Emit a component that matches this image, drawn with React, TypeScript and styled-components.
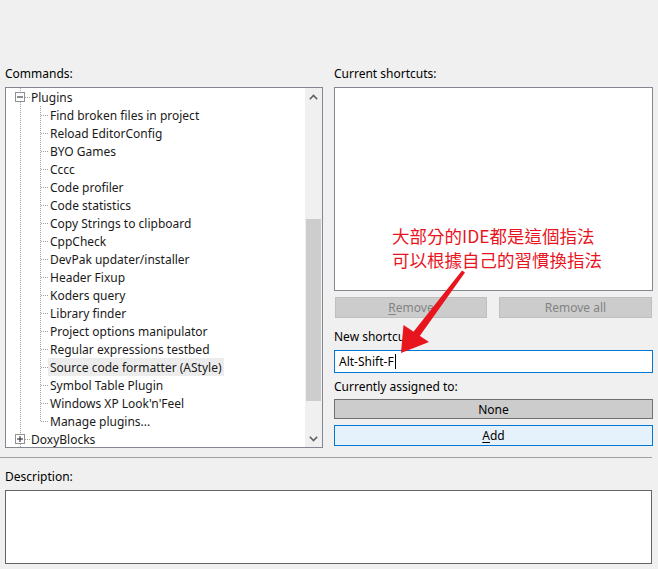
import React from "react";
import styled, { createGlobalStyle } from "styled-components";

const Global = createGlobalStyle`
  html, body { margin: 0; padding: 0; background: #f0f0f0; }
  body { font-family: "Noto Sans", "Open Sans", sans-serif; font-size: 12px; color: #000; }
  * { box-sizing: border-box; }
`;

const Page = styled.div`
  position: relative;
  width: 658px;
  height: 569px;
  overflow: hidden;
  padding: 64px 6px 0 5px;
  display: flex;
  flex-direction: column;
`;

const Columns = styled.div`
  display: grid;
  grid-template-columns: 318px 319px;
  column-gap: 11px;
  align-items: start;
`;

const Column = styled.div`
  display: flex;
  flex-direction: column;
`;

const Label = styled.div<{ $mt?: number; $mb?: number }>`
  height: 18px;
  line-height: 17px;
  padding-top: 1px;
  margin-top: ${(p) => p.$mt ?? 0}px;
  margin-bottom: ${(p) => p.$mb ?? 5}px;
  white-space: nowrap;
  color: #000;
`;

const TreeBox = styled.div`
  position: relative;
  height: 361px;
  border: 1px solid #828790;
  background: #fff;
  display: flex;
  overflow: hidden;
`;

const TreeRows = styled.div`
  flex: 1;
  display: flex;
  flex-direction: column;
  overflow: hidden;
`;

const Row = styled.div`
  height: 18px;
  flex: none;
  display: flex;
  align-items: center;
  white-space: nowrap;
  color: #1a1a1a;
`;

const RowText = styled.span<{ $selected?: boolean }>`
  height: 18px;
  line-height: 17px;
  padding: 1px 2px 0;
  margin-left: -2px;
  background: ${(p) => (p.$selected ? "#ececec" : "transparent")};
`;

const ScrollBar = styled.div`
  width: 17px;
  flex: none;
  background: #f0f0f0;
  display: flex;
  flex-direction: column;
  align-items: center;
`;

const ScrollArrow = styled.div`
  width: 17px;
  height: 17px;
  flex: none;
  display: flex;
  align-items: center;
  justify-content: center;
`;

const ScrollTrack = styled.div`
  flex: 1;
  width: 15px;
  display: flex;
  flex-direction: column;
`;

const Thumb = styled.div`
  width: 15px;
  background: #cdcdcd;
  margin-top: 114px;
  height: 182px;
`;

const ListBox = styled.div`
  position: relative;
  height: 204px;
  border: 1px solid #828790;
  background: #fff;
`;

const Annotation = styled.div`
  position: absolute;
  left: 57px;
  top: 136px;
  font-family: "Noto Sans CJK TC", "Noto Sans CJK SC", sans-serif;
  font-size: 17.5px;
  line-height: 24px;
  color: #e8151f;
  white-space: nowrap;
`;

const ButtonRow = styled.div`
  display: grid;
  grid-template-columns: 152px 153px;
  column-gap: 12px;
  padding-left: 1px;
  margin-top: 6px;
`;

const Button = styled.div<{ $variant: "disabled" | "neutral" | "primary"; $h: number }>`
  height: ${(p) => p.$h}px;
  display: flex;
  align-items: center;
  justify-content: center;
  white-space: nowrap;
  border: 1px solid
    ${(p) => (p.$variant === "disabled" ? "#bfbfbf" : p.$variant === "neutral" ? "#707070" : "#0078d7")};
  background: ${(p) => (p.$variant === "primary" ? "#e5f1fb" : "#cccccc")};
  color: ${(p) => (p.$variant === "disabled" ? "#838383" : "#000")};
`;

const Underline = styled.span`
  text-decoration: underline;
  text-underline-offset: 2px;
`;

const Input = styled.div`
  height: 23px;
  border: 1px solid #0078d7;
  background: #fff;
  display: flex;
  align-items: center;
  padding-left: 4px;
  white-space: nowrap;
`;

const Caret = styled.span`
  display: inline-block;
  width: 1px;
  height: 15px;
  background: #000;
  margin-left: 1px;
`;

const Separator = styled.div`
  height: 1px;
  background: #a0a0a0;
  margin: 9px 0 0 -5px;
`;

const TextArea = styled.div`
  height: 74px;
  border: 1px solid #646464;
  background: #fff;
`;

const ArrowOverlay = styled.svg`
  position: absolute;
  left: 0;
  top: 0;
  pointer-events: none;
`;

type Item = { label: string; depth: 0 | 1; expander?: "minus" | "plus"; last?: boolean; selected?: boolean };

const items: Item[] = [
  { label: "Plugins", depth: 0, expander: "minus" },
  { label: "Find broken files in project", depth: 1 },
  { label: "Reload EditorConfig", depth: 1 },
  { label: "BYO Games", depth: 1 },
  { label: "Cccc", depth: 1 },
  { label: "Code profiler", depth: 1 },
  { label: "Code statistics", depth: 1 },
  { label: "Copy Strings to clipboard", depth: 1 },
  { label: "CppCheck", depth: 1 },
  { label: "DevPak updater/installer", depth: 1 },
  { label: "Header Fixup", depth: 1 },
  { label: "Koders query", depth: 1 },
  { label: "Library finder", depth: 1 },
  { label: "Project options manipulator", depth: 1 },
  { label: "Regular expressions testbed", depth: 1 },
  { label: "Source code formatter (AStyle)", depth: 1, selected: true },
  { label: "Symbol Table Plugin", depth: 1 },
  { label: "Windows XP Look'n'Feel", depth: 1 },
  { label: "Manage plugins...", depth: 1, last: true },
  { label: "DoxyBlocks", depth: 0, expander: "plus" },
];

const DOT = "#a0a0a0";

function Gutter({ item }: { item: Item }) {
  const w = item.depth === 0 ? 25 : 44;
  return (
    <svg width={w} height={18} style={{ flex: "none", display: "block" }}>
      {item.depth === 0 ? (
        <>
          <line x1={14.5} y1={0} x2={14.5} y2={4} stroke={DOT} strokeDasharray="1 1" />
          <line x1={14.5} y1={14} x2={14.5} y2={18} stroke={DOT} strokeDasharray="1 1" />
          <rect x={9.5} y={4.5} width={9} height={9} fill="#fff" stroke="#919191" />
          <line x1={11} y1={9} x2={17} y2={9} stroke="#1a1a1a" />
          {item.expander === "plus" && <line x1={14} y1={6} x2={14} y2={12} stroke="#1a1a1a" />}
          <line x1={19} y1={9.5} x2={25} y2={9.5} stroke={DOT} strokeDasharray="1 1" />
        </>
      ) : (
        <>
          <line x1={14.5} y1={0} x2={14.5} y2={18} stroke={DOT} strokeDasharray="1 1" />
          <line x1={34.5} y1={0} x2={34.5} y2={item.last ? 10 : 18} stroke={DOT} strokeDasharray="1 1" />
          <line x1={35} y1={9.5} x2={43} y2={9.5} stroke={DOT} strokeDasharray="1 1" />
        </>
      )}
    </svg>
  );
}

function Chevron({ up }: { up?: boolean }) {
  return (
    <svg width={9} height={6} viewBox="0 0 9 6">
      <path
        d={up ? "M0.8 5.2 L4.5 1.5 L8.2 5.2" : "M0.8 0.8 L4.5 4.5 L8.2 0.8"}
        fill="none"
        stroke="#606060"
        strokeWidth={1.6}
      />
    </svg>
  );
}

export default function App() {
  return (
    <>
      <Global />
      <Page>
        <Columns>
          <Column>
            <Label>Commands:</Label>
            <TreeBox>
              <TreeRows>
                {items.map((it) => (
                  <Row key={it.label}>
                    <Gutter item={it} />
                    <RowText $selected={it.selected}>{it.label}</RowText>
                  </Row>
                ))}
              </TreeRows>
              <ScrollBar>
                <ScrollArrow>
                  <Chevron up />
                </ScrollArrow>
                <ScrollTrack>
                  <Thumb />
                </ScrollTrack>
                <ScrollArrow>
                  <Chevron />
                </ScrollArrow>
              </ScrollBar>
            </TreeBox>
          </Column>
          <Column>
            <Label>Current shortcuts:</Label>
            <ListBox>
              <Annotation>
                大部分的IDE都是這個指法
                <br />
                可以根據自己的習慣換指法
              </Annotation>
            </ListBox>
            <ButtonRow>
              <Button $variant="disabled" $h={21}>
                <Underline>R</Underline>emove
              </Button>
              <Button $variant="disabled" $h={21}>
                Remove all
              </Button>
            </ButtonRow>
            <Label $mt={9}>New shortcut:</Label>
            <Input>
              Alt-Shift-F
              <Caret />
            </Input>
            <Label $mt={4} $mb={4}>
              Currently assigned to:
            </Label>
            <Button $variant="neutral" $h={20}>
              None
            </Button>
            <div style={{ height: 6 }} />
            <Button $variant="primary" $h={21}>
              <Underline>A</Underline>dd
            </Button>
          </Column>
        </Columns>
        <Separator />
        <Label $mt={9}>Description:</Label>
        <TextArea />
        <ArrowOverlay width={658} height={569}>
          <path d="M462 270.5 L465 272.5 L419 337 L412.5 333 Z" fill="#e8151f" />
          <path d="M401 353 L403.5 325 L429 342 Z" fill="#e8151f" />
        </ArrowOverlay>
      </Page>
    </>
  );
}
